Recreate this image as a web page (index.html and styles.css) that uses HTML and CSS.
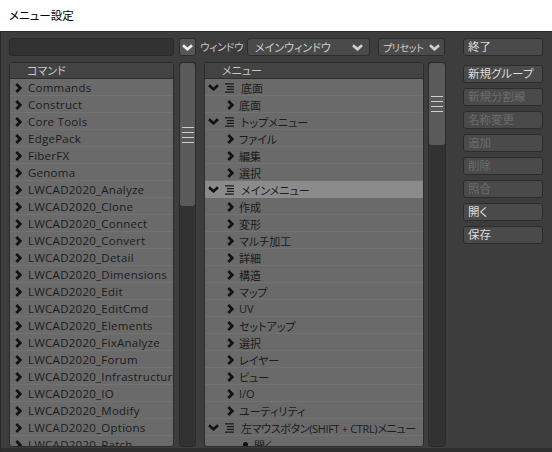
FILE: index.html
```html
<!DOCTYPE html>
<html lang="ja">
<head>
<meta charset="utf-8">
<title>メニュー設定</title>
<link rel="stylesheet" href="styles.css">
</head>
<body>
<svg class="defs" width="0" height="0">
  <defs>
    <symbol id="chev-r" viewBox="0 0 7 10"><polyline points="1.3,1 5.3,5 1.3,9" fill="none" stroke="currentColor" stroke-width="2.7"/></symbol>
    <symbol id="chev-d" viewBox="0 0 11 7"><polyline points="1,1.3 5.5,5.3 10,1.3" fill="none" stroke="currentColor" stroke-width="2.7"/></symbol>
    <symbol id="menu-ic" viewBox="0 0 10 11"><path d="M0 1h10M2 4h8M2 7h8M0 10h10" stroke="currentColor" stroke-width="1.3" fill="none"/></symbol>
  </defs>
</svg>
<div class="window">
  <div class="titlebar">メニュー設定</div>
  <div class="body">
    <div class="main">
      <div class="toolbar">
        <div class="search"></div>
        <div class="dropbtn"><svg class="ic-d"><use href="#chev-d"/></svg></div>
        <span class="label">ウィンドウ</span>
        <div class="select sel-window"><span>メインウィンドウ</span><svg class="ic-d"><use href="#chev-d"/></svg></div>
        <div class="select sel-preset"><span>プリセット</span><svg class="ic-d"><use href="#chev-d"/></svg></div>
      </div>
      <div class="panes">
        <div class="list list-cmd">
          <div class="list-head">コマンド</div>
          <div class="list-body">
            <div class="row"><svg class="ic-r"><use href="#chev-r"/></svg><span>Commands</span></div>
            <div class="row"><svg class="ic-r"><use href="#chev-r"/></svg><span>Construct</span></div>
            <div class="row"><svg class="ic-r"><use href="#chev-r"/></svg><span>Core Tools</span></div>
            <div class="row"><svg class="ic-r"><use href="#chev-r"/></svg><span>EdgePack</span></div>
            <div class="row"><svg class="ic-r"><use href="#chev-r"/></svg><span>FiberFX</span></div>
            <div class="row"><svg class="ic-r"><use href="#chev-r"/></svg><span>Genoma</span></div>
            <div class="row"><svg class="ic-r"><use href="#chev-r"/></svg><span>LWCAD2020_Analyze</span></div>
            <div class="row"><svg class="ic-r"><use href="#chev-r"/></svg><span>LWCAD2020_Clone</span></div>
            <div class="row"><svg class="ic-r"><use href="#chev-r"/></svg><span>LWCAD2020_Connect</span></div>
            <div class="row"><svg class="ic-r"><use href="#chev-r"/></svg><span>LWCAD2020_Convert</span></div>
            <div class="row"><svg class="ic-r"><use href="#chev-r"/></svg><span>LWCAD2020_Detail</span></div>
            <div class="row"><svg class="ic-r"><use href="#chev-r"/></svg><span>LWCAD2020_Dimensions</span></div>
            <div class="row"><svg class="ic-r"><use href="#chev-r"/></svg><span>LWCAD2020_Edit</span></div>
            <div class="row"><svg class="ic-r"><use href="#chev-r"/></svg><span>LWCAD2020_EditCmd</span></div>
            <div class="row"><svg class="ic-r"><use href="#chev-r"/></svg><span>LWCAD2020_Elements</span></div>
            <div class="row"><svg class="ic-r"><use href="#chev-r"/></svg><span>LWCAD2020_FixAnalyze</span></div>
            <div class="row"><svg class="ic-r"><use href="#chev-r"/></svg><span>LWCAD2020_Forum</span></div>
            <div class="row"><svg class="ic-r"><use href="#chev-r"/></svg><span>LWCAD2020_Infrastructure</span></div>
            <div class="row"><svg class="ic-r"><use href="#chev-r"/></svg><span>LWCAD2020_IO</span></div>
            <div class="row"><svg class="ic-r"><use href="#chev-r"/></svg><span>LWCAD2020_Modify</span></div>
            <div class="row"><svg class="ic-r"><use href="#chev-r"/></svg><span>LWCAD2020_Options</span></div>
            <div class="row"><svg class="ic-r"><use href="#chev-r"/></svg><span>LWCAD2020_Patch</span></div>
          </div>
        </div>
        <div class="scroll scroll-l"><div class="thumb"><div class="grip"></div></div></div>
        <div class="list list-menu">
          <div class="list-head">メニュー</div>
          <div class="list-body">
            <div class="row lv0"><svg class="ic-d"><use href="#chev-d"/></svg><svg class="ic-m"><use href="#menu-ic"/></svg><span>底面</span></div>
            <div class="row lv1"><svg class="ic-r"><use href="#chev-r"/></svg><span>底面</span></div>
            <div class="row lv0"><svg class="ic-d"><use href="#chev-d"/></svg><svg class="ic-m"><use href="#menu-ic"/></svg><span>トップメニュー</span></div>
            <div class="row lv1"><svg class="ic-r"><use href="#chev-r"/></svg><span>ファイル</span></div>
            <div class="row lv1"><svg class="ic-r"><use href="#chev-r"/></svg><span>編集</span></div>
            <div class="row lv1"><svg class="ic-r"><use href="#chev-r"/></svg><span>選択</span></div>
            <div class="row lv0 selected"><svg class="ic-d"><use href="#chev-d"/></svg><svg class="ic-m"><use href="#menu-ic"/></svg><span>メインメニュー</span></div>
            <div class="row lv1"><svg class="ic-r"><use href="#chev-r"/></svg><span>作成</span></div>
            <div class="row lv1"><svg class="ic-r"><use href="#chev-r"/></svg><span>変形</span></div>
            <div class="row lv1"><svg class="ic-r"><use href="#chev-r"/></svg><span>マルチ加工</span></div>
            <div class="row lv1"><svg class="ic-r"><use href="#chev-r"/></svg><span>詳細</span></div>
            <div class="row lv1"><svg class="ic-r"><use href="#chev-r"/></svg><span>構造</span></div>
            <div class="row lv1"><svg class="ic-r"><use href="#chev-r"/></svg><span>マップ</span></div>
            <div class="row lv1"><svg class="ic-r"><use href="#chev-r"/></svg><span>UV</span></div>
            <div class="row lv1"><svg class="ic-r"><use href="#chev-r"/></svg><span>セットアップ</span></div>
            <div class="row lv1"><svg class="ic-r"><use href="#chev-r"/></svg><span>選択</span></div>
            <div class="row lv1"><svg class="ic-r"><use href="#chev-r"/></svg><span>レイヤー</span></div>
            <div class="row lv1"><svg class="ic-r"><use href="#chev-r"/></svg><span>ビュー</span></div>
            <div class="row lv1"><svg class="ic-r"><use href="#chev-r"/></svg><span>I/O</span></div>
            <div class="row lv1"><svg class="ic-r"><use href="#chev-r"/></svg><span>ユーティリティ</span></div>
            <div class="row lv0 long"><svg class="ic-d"><use href="#chev-d"/></svg><svg class="ic-m"><use href="#menu-ic"/></svg><span>左マウスボタン(SHIFT + CTRL)メニュー</span></div>
            <div class="row lv2"><span class="bullet"></span><span>開く</span></div>
          </div>
        </div>
        <div class="scroll scroll-m"><div class="thumb"><div class="grip"></div></div></div>
      </div>
    </div>
    <div class="buttons">
      <div class="btn first">終了</div>
      <div class="btn">新規グループ</div>
      <div class="btn disabled">新規分割線</div>
      <div class="btn disabled">名称変更</div>
      <div class="btn disabled">追加</div>
      <div class="btn disabled">削除</div>
      <div class="btn disabled">照合</div>
      <div class="btn">開く</div>
      <div class="btn">保存</div>
    </div>
  </div>
</div>
</body>
</html>
```

FILE: styles.css
```css
* { box-sizing: border-box; }
html, body { margin: 0; padding: 0; }
body {
  width: 552px;
  height: 452px;
  overflow: hidden;
  background: #3d3d3d;
  font-family: "Open Sans", "Noto Sans CJK JP", sans-serif;
  font-size: 11px;
  font-feature-settings: "palt";
}
.defs { position: absolute; width: 0; height: 0; }
.window { width: 552px; height: 452px; display: flex; flex-direction: column; }
.titlebar {
  height: 32px;
  background: #ffffff;
  color: #000;
  font-size: 11.5px;
  line-height: 31px;
  padding-left: 9px;
  border-bottom: 1px solid #2b2b2b;
}
.body {
  flex: 1;
  display: flex;
  padding: 6px 0 0 8px;
  background: #3d3d3d;
  border-left: 1px solid #2a2a2a;
  border-bottom: 4px solid #2f2f2f;
}
.main { width: 437px; display: flex; flex-direction: column; }
.toolbar { height: 18px; display: flex; align-items: stretch; }
.search {
  width: 165px;
  background: #323232;
  border: 1px solid #2a2a2a;
  border-radius: 3px;
}
.dropbtn {
  width: 17px;
  margin-left: 5px;
  background: #565656;
  border: 1px solid #2c2c2c;
  border-radius: 3px;
  color: #ececec;
  display: flex; align-items: center; justify-content: center;
}
.ic-d { width: 11px; height: 7px; flex: none; }
.ic-r { width: 7px; height: 10px; flex: none; }
.ic-m { width: 9px; height: 10px; flex: none; }
.label {
  width: 51px;
  padding-left: 4px;
  color: #c8c8c8;
  line-height: 18px;
  white-space: nowrap;
  font-size: 10.5px;
  letter-spacing: -0.3px;
}
.select {
  background: #4a4a4a;
  border: 1px solid #2c2c2c;
  border-radius: 3px;
  color: #cfcfcf;
  display: flex; align-items: center; justify-content: space-between;
  padding: 0 6px 0 7px;
  white-space: nowrap;
  font-size: 11px;
}
.select .ic-d { color: #d0d0d0; }
.sel-window { width: 123px; }
.sel-preset { width: 67px; margin-left: 8px; padding-left: 4px; padding-right: 4px; font-size: 10px; letter-spacing: -0.4px; }
.panes { height: 385px; margin-top: 6px; display: flex; }
.list {
  border: 1px solid #2c2c2c;
  border-radius: 3px;
  background: #6a6a6a;
  overflow: hidden;
  display: flex; flex-direction: column;
}
.list-cmd { width: 165px; }
.list-menu { width: 220px; margin-left: 8px; }
.list-head {
  height: 16px;
  flex: none;
  background: #434343;
  border-bottom: 1px solid #2e2e2e;
  color: #c8c8c8;
  line-height: 15px;
  padding-left: 17px;
}
.list-body { flex: 1; overflow: hidden; }
.row {
  height: 17px;
  display: flex;
  align-items: center;
  border-bottom: 1px solid #727272;
  color: #1c1c1c;
  white-space: nowrap;
  font-size: 11.5px;
  padding-top: 1px;
}
.list-cmd .row { padding-left: 5px; letter-spacing: 0.25px; }
.list-cmd .row span { margin-left: 6px; }
.row .ic-r, .row .ic-d { color: #121212; }
.list-menu .row { font-size: 11px; }
.lv0 { padding-left: 3px; }
.lv0 .ic-m { margin-left: 6px; color: #1a1a1a; }
.lv0 span { margin-left: 7px; }
.lv1 { padding-left: 22px; }
.lv1 span { margin-left: 5px; }
.lv2 { padding-left: 38px; }
.long span { letter-spacing: -0.35px; }
.bullet { width: 5px; height: 5px; border-radius: 50%; background: #111; }
.lv2 span + span { margin-left: 6px; }
.selected { background: #8b8b8b; border-bottom-color: #8b8b8b; }
.scroll {
  background: #323232;
  border: 1px solid #2b2b2b;
  border-radius: 3px;
  overflow: hidden;
}
.scroll-l { width: 17px; margin-left: 5px; }
.scroll-m { width: 18px; margin-left: 4px; }
.thumb {
  background: #5a5a5a;
  border-radius: 3px;
  display: flex; align-items: center; justify-content: center;
}
.scroll-l .thumb { height: 143px; }
.scroll-m .thumb { height: 82px; }
.grip {
  width: 12px;
  height: 16px;
  background: repeating-linear-gradient(to bottom, #cfcfcf 0 1px, transparent 1px 5px);
}
.buttons { width: 80px; margin-left: 17px; display: flex; flex-direction: column; gap: 5px; }
.btn {
  height: 18px;
  background: #4a4a4a;
  border: 1px solid #2c2c2c;
  border-radius: 3px;
  color: #dcdcdc;
  line-height: 16px;
  padding-left: 4px;
  font-size: 11.5px;
  white-space: nowrap;
}
.btn.first { margin-bottom: 4px; }
.btn.disabled { color: #6c6c6c; }
```
